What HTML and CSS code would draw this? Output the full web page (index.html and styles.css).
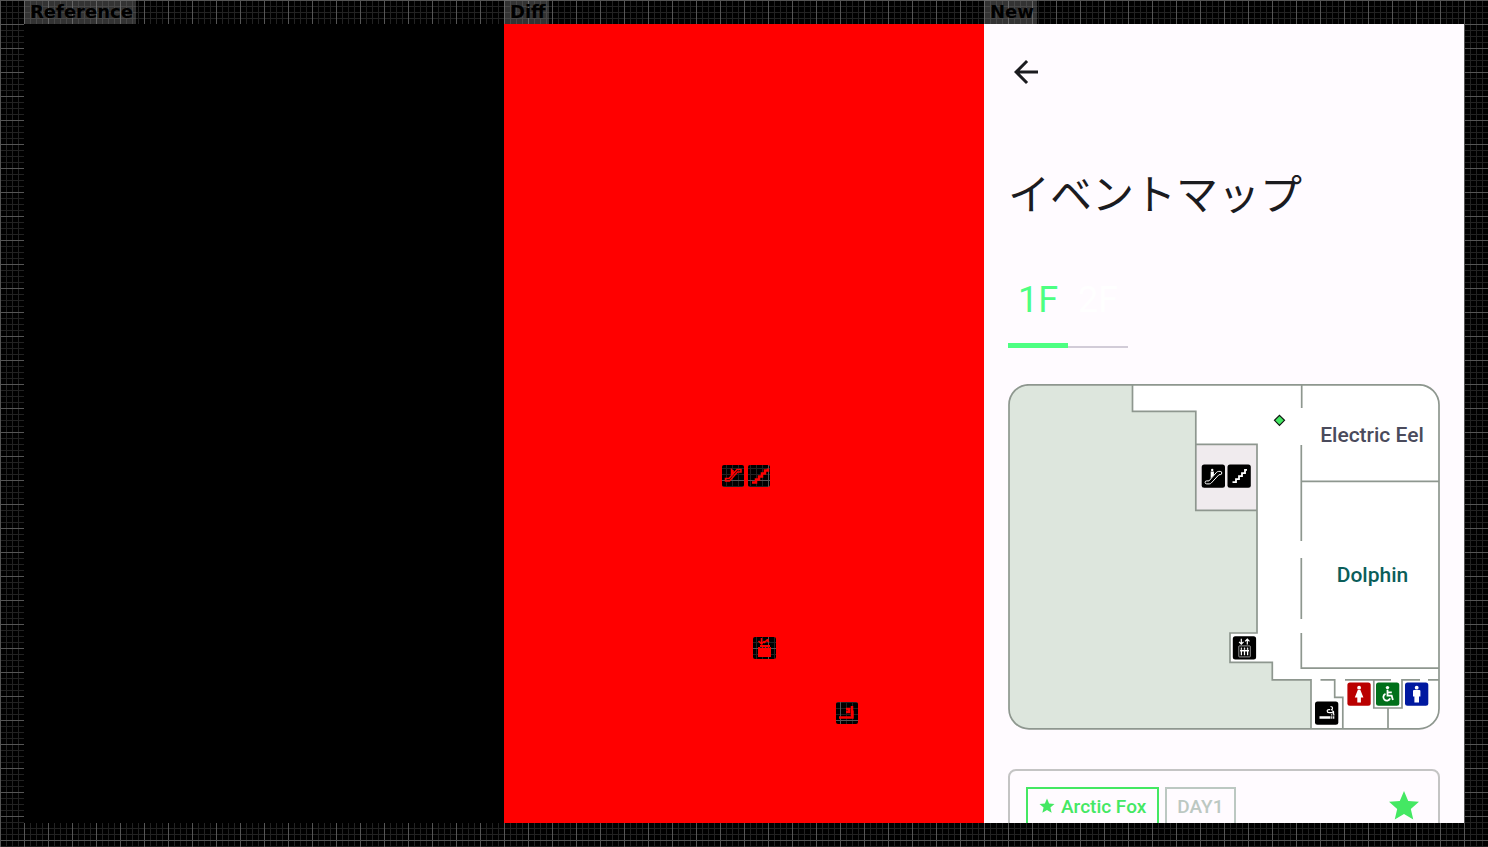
FILE: index.html
```
<!DOCTYPE html>
<html lang="ja">
<head>
<meta charset="utf-8">
<title>イベントマップ</title>
<link rel="stylesheet" href="styles.css">
</head>
<body>
<main class="compare">
  <section class="pane">
    <h2 class="pane-label">Reference</h2>
    <div class="shot shot-empty"></div>
  </section>

  <section class="pane">
    <h2 class="pane-label">Diff</h2>
    <div class="shot shot-diff">
      <svg class="diff-marks" viewBox="504 24 480 799" preserveAspectRatio="xMinYMin meet" aria-hidden="true">
        <defs>
          <pattern id="mesh" width="24" height="24" patternUnits="userSpaceOnUse">
            <rect width="24" height="24" fill="#000"/>
            <path d="M6.500 0V24M12.500 0V24M18.500 0V24M0 6.500H24M0 12.500H24M0 18.500H24" stroke="#222" fill="none"/>
            <path d="M.5 0V24M0 .5H24" stroke="#555" fill="none"/>
          </pattern>
        </defs>
        <g fill="url(#mesh)">
          <rect x="722" y="465" width="22" height="22" rx="2"/>
          <rect x="748" y="465" width="22" height="22" rx="2"/>
          <rect x="753" y="637" width="23" height="22" rx="2"/>
          <rect x="836" y="702" width="22" height="22" rx="2"/>
        </g>
        <g fill="none" stroke="#f00" stroke-width="1.500">
          <path d="M725.500 481h4l8-9h3.500v-2.500h-4l-8 9h-3.500zM731.500 468.500v7M733 470v4"/>
          <path d="M752 482.500h4v-3h3v-3h3v-3h3v-3h3v-2" stroke-width="2.500"/>
          <path d="M761.500 638v7M758.500 641l3 3 3-3M764 643l3-3 2 2M768 639v3"/>
          <path d="M839 717.500h13.500v-7M852 706v10M846 709h3v3h-3" stroke-width="2.500"/>
        </g>
        <path fill="#f00" d="M758 647h2v-2h10v2h1v10h-13z"/>
        <path d="M760 647.500h10" stroke="#222" stroke-dasharray="2 1"/>
      </svg>
    </div>
  </section>

  <section class="pane">
    <h2 class="pane-label">New</h2>
    <div class="shot shot-app">
      <header class="app-bar">
        <button class="back" type="button" aria-label="戻る">
          <svg width="36" height="36" viewBox="0 0 24 24"><path fill="#1b1b1f" d="M20 11H7.830l5.590-5.590L12 4l-8 8 8 8 1.410-1.410L7.830 13H20z"/></svg>
        </button>
      </header>
      <h1 class="title">イベントマップ</h1>
      <div class="tabs" role="tablist">
        <button class="tab tab-active" type="button" role="tab" aria-selected="true">1F</button>
        <button class="tab" type="button" role="tab" aria-selected="false">2F</button>
      </div>

      <svg class="map" viewBox="1008 384 432 346" role="img" aria-label="1F">
        <rect x="1009" y="384.800" width="430" height="344" rx="20" fill="#fff"/>
        <path fill="#dde6dd" d="M1029 384.800H1132.500V411.300H1196V510.300H1257V633H1230V662.300H1272.300V679.800H1311V728.700H1029Q1009 728.700 1009 708.700V404.800Q1009 384.800 1029 384.800Z"/>
        <rect x="1196" y="444.300" width="61" height="66" fill="#f0ebee"/>
        <g fill="none" stroke="#8e978f" stroke-width="1.700">
          <rect x="1009" y="384.800" width="430" height="344" rx="20"/>
          <path d="M1132.500 384.800V411.300H1195.800V510.300H1257M1196 444.300H1257V633H1230V662.300H1272.300V679.800H1311V728.700"/>
          <path d="M1301.700 385V408M1301.300 445V541M1301.300 481.300H1439M1301.300 558V619M1301.300 633V668.200H1439"/>
          <path d="M1320.500 679.800H1334.700V697.400H1342.800V728.500M1345 679.800H1391M1373.800 679.800V708H1402V679.800H1420M1428 679.800H1439M1388 708V728.500"/>
        </g>
        <path d="M1279.500 415.300l5 5-5 5-5-5z" fill="#44e863" stroke="#101410" stroke-width="1.200"/>
        <text class="room" x="1372" y="442" text-anchor="middle">Electric Eel</text>
        <text class="room room-dolphin" x="1372.500" y="582" text-anchor="middle">Dolphin</text>

        <!-- escalator -->
        <g transform="translate(1201.700 464.400)">
          <rect width="23.300" height="23.300" rx="2.500"/>
          <path d="M5 16.500h2.300l7.700-8.700q.7-.8 2-.8h1.500q1.600 0 1.600 1.600t-1.600 1.700h-1.200l-7.800 8.400q-.7.800-2 .8H5q-1.600 0-1.600-1.500T5 16.500z" fill="none" stroke="#fff" stroke-width="1"/>
          <circle cx="10.500" cy="5.500" r="1.200" fill="#fff"/><path d="M9 7.200h3.200v3.300L9 14z" fill="#fff"/>
        </g>
        <!-- stairs -->
        <g transform="translate(1227.500 464.400)">
          <rect width="23.300" height="23.300" rx="2.500"/>
          <path d="M5 17.700h3.500v-3h3v-3h3v-3h3V5.500h2" fill="none" stroke="#fff" stroke-width="1.800"/>
        </g>
        <!-- elevator -->
        <g transform="translate(1232.800 636.200)">
          <rect width="23.300" height="23.300" rx="2.500"/>
          <path d="M8.500 2.500v5.500M6.300 5.700l2.200 2.300 2.200-2.300M14.500 8.200V3M12.300 5.200l2.200-2.300 2.200 2.300" fill="none" stroke="#fff" stroke-width="1.200"/>
          <rect x="6" y="9.700" width="11.500" height="11" rx=".5" fill="none" stroke="#bbb" stroke-width=".8"/>
          <path d="M8.600 13v6M11.700 13v6M14.800 13v6" stroke="#fff" stroke-width="1.300"/>
          <path d="M7.300 14.500h8.900" stroke="#fff" stroke-width="1.500"/>
          <g fill="#fff"><circle cx="8.600" cy="12" r=".8"/><circle cx="11.700" cy="12" r=".8"/><circle cx="14.800" cy="12" r=".8"/></g>
        </g>
        <!-- smoking -->
        <g transform="translate(1315 701.500)">
          <rect width="23.300" height="23.300" rx="2.500"/>
          <path d="M4.500 14.800h11v2.500H4.500zM16.200 14.800h1.200v2.500h-1.200zM18.100 14.800h1.200v2.500h-1.200z" fill="#fff"/>
          <path d="M18.800 14v-1.300q0-1.500-1.700-1.500h-3.100q-1.800 0-1.800-1.600t1.800-1.500h1.200M16.700 14v-1.300M15.500 5q2 0 2 1.700t-1.500 1.700M17 9.300q1.800.2 1.800 1.700" fill="none" stroke="#fff" stroke-width="1.200"/>
        </g>
        <!-- women -->
        <g transform="translate(1347.400 682.400)">
          <rect width="23.300" height="23.300" rx="2.500" fill="#ba0000"/>
          <circle cx="11.700" cy="5.300" r="1.900" fill="#fff"/>
          <path fill="#fff" d="M10.400 7.700h2.600l3 7.500h-2.500V20h-3.600v-4.800H7.400z"/>
        </g>
        <!-- accessible -->
        <g transform="translate(1376 682.400)">
          <rect width="23.300" height="23.300" rx="2.500" fill="#00701a"/>
          <circle cx="11.500" cy="5.200" r="1.700" fill="#fff"/>
          <path d="M11.500 7.300v6h4.200l1.200 4.200M11.500 10h4.300M9.500 11.500a3.500 3.500 0 1 0 4.600 4.500" fill="none" stroke="#fff" stroke-width="1.800"/>
        </g>
        <!-- men -->
        <g transform="translate(1405 682.400)">
          <rect width="23.300" height="23.300" rx="2.500" fill="#0019a0"/>
          <circle cx="11.700" cy="5.300" r="1.900" fill="#fff"/>
          <path fill="#fff" d="M9 7.700h5.400q1 0 1 1v5.500h-1.400V20H9.400v-5.800H8V8.700q0-1 1-1z"/>
        </g>
      </svg>

      <article class="card">
        <div class="chips">
          <span class="chip chip-room">
            <svg width="18" height="18" viewBox="0 0 24 24" aria-hidden="true"><path fill="currentColor" d="M12 17.270L18.180 21l-1.640-7.030L22 9.240l-7.190-.61L12 2 9.190 8.630 2 9.240l5.460 4.730L5.820 21z"/></svg>
            Arctic Fox
          </span>
          <span class="chip">DAY1</span>
        </div>
        <button class="favorite" type="button" aria-label="お気に入り">
          <svg width="36" height="36" viewBox="0 0 24 24"><path fill="currentColor" d="M12 17.270L18.180 21l-1.640-7.030L22 9.240l-7.190-.61L12 2 9.190 8.630 2 9.240l5.460 4.730L5.820 21z"/></svg>
        </button>
      </article>
    </div>
  </section>
</main>
</body>
</html>
```
FILE: styles.css
```
* {
  box-sizing: border-box;
}

body {
  margin: 0;
  background-color: #000;
  background-image:
    linear-gradient(to right, #555 1px, transparent 1px),
    linear-gradient(to bottom, #555 1px, transparent 1px),
    linear-gradient(to right, #222 1px, transparent 1px),
    linear-gradient(to bottom, #222 1px, transparent 1px);
  background-size: 24px 24px, 24px 24px, 6px 6px, 6px 6px;
  font-family: Roboto, "Noto Sans CJK JP", sans-serif;
}

button {
  padding: 0;
  border: 0;
  background: none;
  font: inherit;
  color: inherit;
}

svg {
  display: block;
}

.compare {
  display: flex;
  height: 100vh;
  padding: 0 24px 24px;
}

.pane {
  flex: 1;
  min-width: 0;
  display: flex;
  flex-direction: column;
  align-items: flex-start;
}

.pane-label {
  flex: none;
  height: 24px;
  margin: 0;
  padding: 0 3px 0 6px;
  background: rgba(128, 128, 128, 0.4);
  color: #000;
  font: bold 18px/24px "DejaVu Sans", sans-serif;
}

.shot {
  flex: 1;
  min-height: 0;
  width: 100%;
  overflow: hidden;
}

.shot-empty {
  background: #000;
}

.shot-diff {
  background: #f00;
}

.diff-marks {
  width: 100%;
}

.shot-app {
  padding: 0 24px;
  background: #fffbff;
  color: #1b1b1f;
}

.app-bar {
  display: flex;
  align-items: center;
  height: 96px;
}

.title {
  margin: 42px 0 0;
  font: 400 42px/60px "Noto Sans CJK JP", sans-serif;
}

.tabs {
  display: flex;
  width: 120px;
  height: 72px;
  margin-top: 54px;
  background: linear-gradient(#d2ccd8, #d2ccd8) bottom left / 100% 2px no-repeat;
}

.tab {
  flex: 1;
  padding-bottom: 20px;
  border-bottom: 5px solid transparent;
  font-size: 36px;
  line-height: 48px;
  color: #fff;
}

.tab-active {
  border-bottom-color: #4dff82;
  color: #4dff82;
}

.map {
  width: 100%;
  margin-top: 36px;
}

.room {
  font-family: Roboto, sans-serif;
  font-size: 21px;
  font-weight: 500;
  fill: #4a4b5c;
}

.room-dolphin {
  fill: #0b5e5a;
}

.card {
  display: flex;
  justify-content: space-between;
  align-items: flex-start;
  height: 240px;
  margin-top: 39px;
  padding: 16px;
  border: 2px solid #c4c4c4;
  border-radius: 8px;
}

.chips {
  display: flex;
  gap: 6px;
}

.chip {
  display: flex;
  align-items: center;
  gap: 5px;
  height: 38px;
  padding: 0 11px 0 10px;
  border: 2px solid #bcc8c2;
  color: #bcc8c2;
  font-size: 19px;
  font-weight: 500;
}

.chip-room {
  border-color: #44e863;
  color: #44e863;
}

.favorite {
  padding-top: 1px;
  color: #44e863;
}
```
